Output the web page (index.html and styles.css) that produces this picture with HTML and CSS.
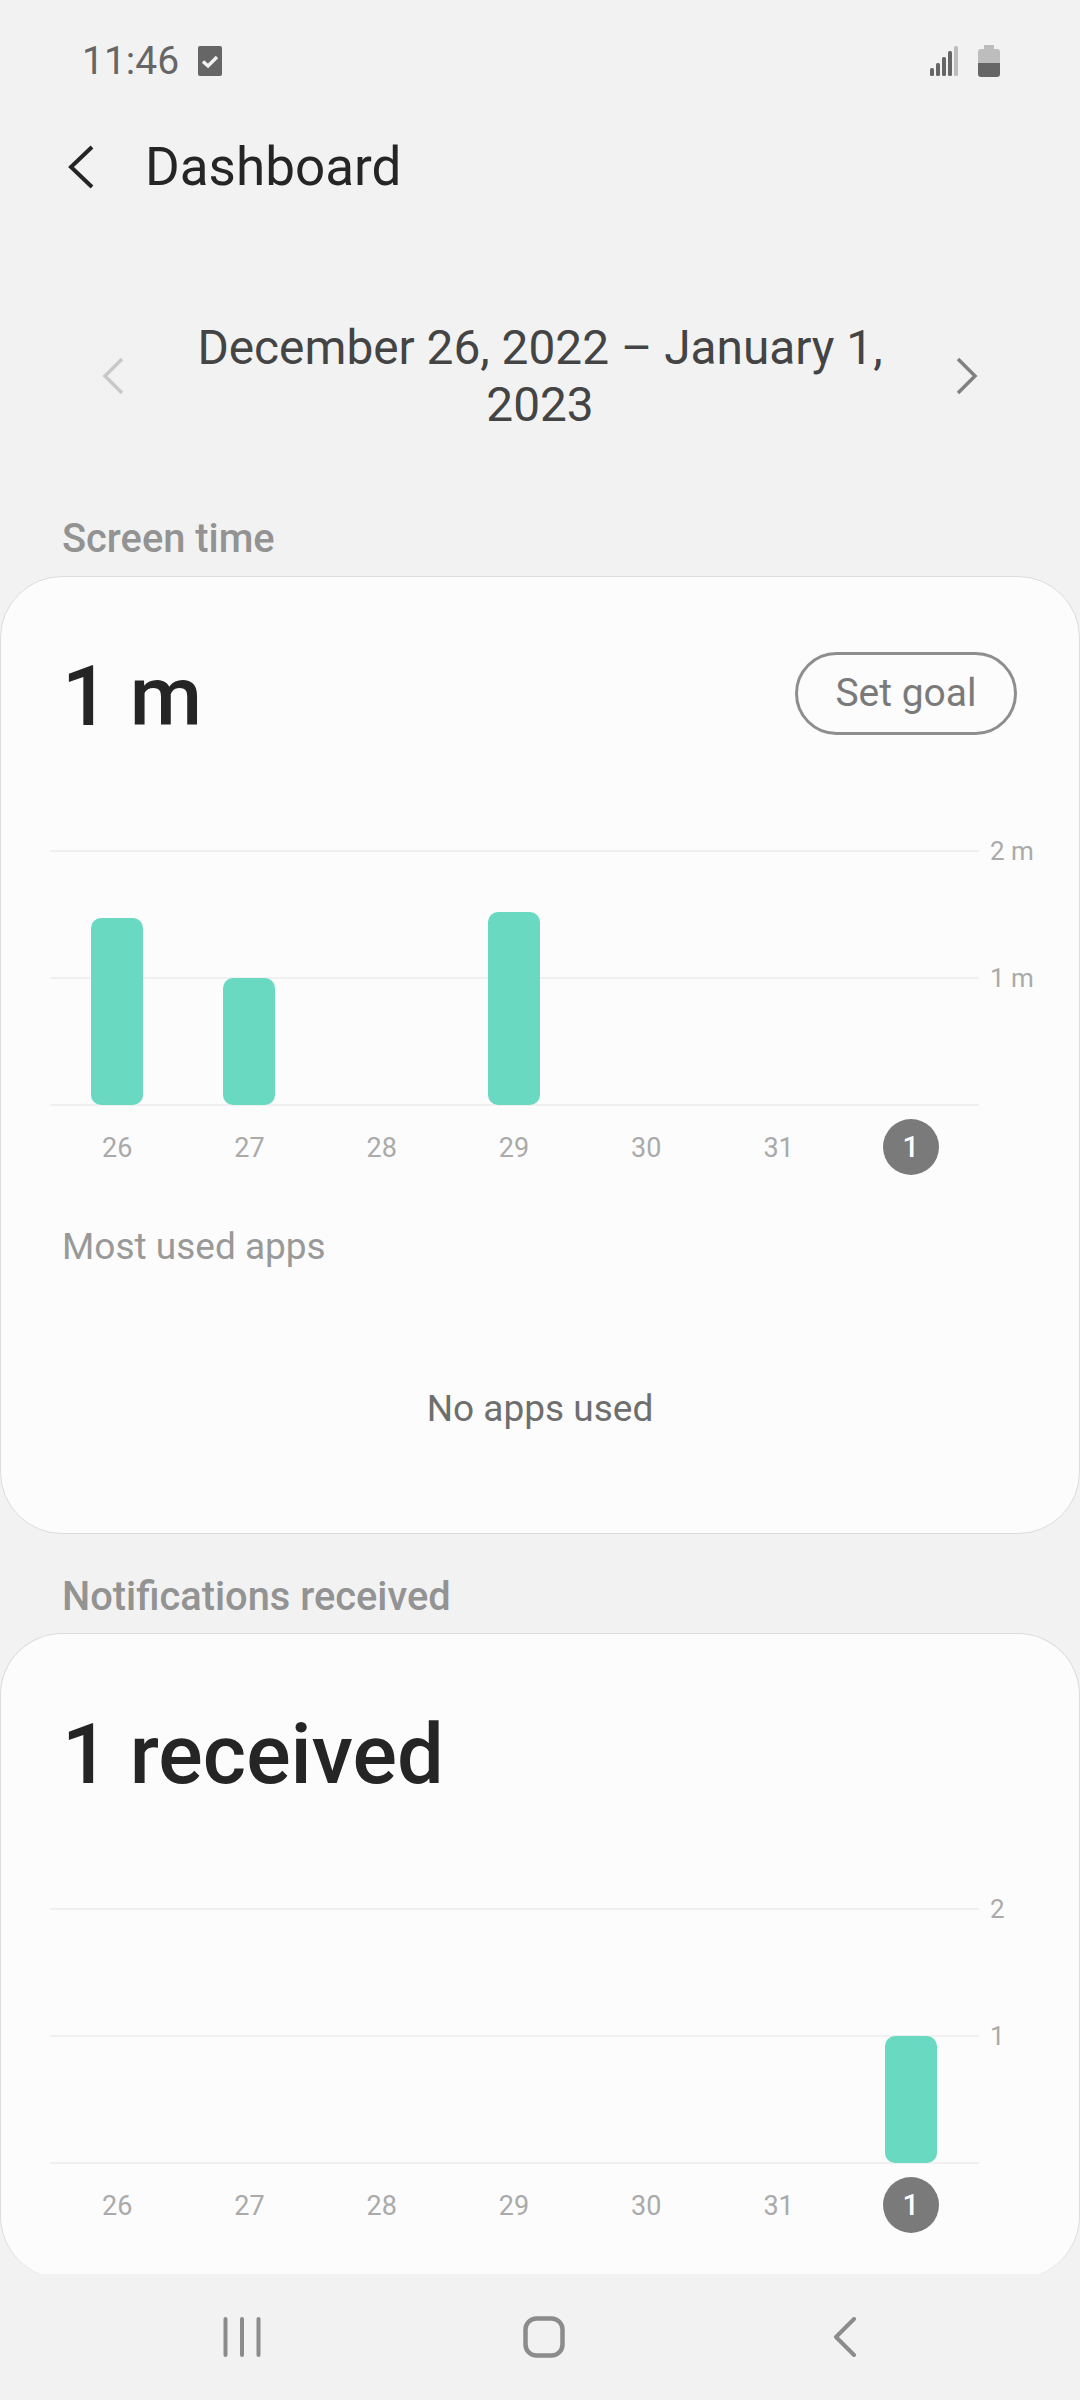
FILE: index.html
```html
<!DOCTYPE html>
<html lang="en">
<head>
    <meta charset="UTF-8">
    <meta name="viewport" content="width=device-width, initial-scale=1.0">
    <title>Dashboard</title>
    <link rel="stylesheet" href="styles.css">
</head>
<body>

    <div class="status-bar">
        <div class="status-left">
            <span class="clock">11:46</span>
            <svg width="24" height="30" viewBox="0 0 24 30"><rect width="24" height="30" rx="2" fill="#666"/><path d="M5 15.5l5 4.5 9-9" fill="none" stroke="#f2f2f2" stroke-width="3.4"/></svg>
        </div>
        <div class="status-right">
            <svg width="28" height="30" viewBox="0 0 28 30">
                <rect x="0" y="22" width="4" height="8" rx="1.5" fill="#666"/>
                <rect x="6" y="17" width="4" height="13" rx="1.5" fill="#666"/>
                <rect x="12" y="11" width="4" height="19" rx="1.5" fill="#666"/>
                <rect x="18" y="5" width="4" height="25" rx="1.5" fill="#666"/>
                <rect x="24" y="0" width="4" height="30" rx="1.5" fill="#bdbdbd"/>
            </svg>
            <svg width="22" height="32" viewBox="0 0 22 32">
                <path d="M6 0h10v4h3a3 3 0 0 1 3 3v11H0V7a3 3 0 0 1 3-3h3z" fill="#bdbdbd"/>
                <path d="M0 18h22v11a3 3 0 0 1-3 3H3a3 3 0 0 1-3-3z" fill="#666"/>
            </svg>
        </div>
    </div>

    <div class="toolbar">
        <svg width="26" height="44" viewBox="0 0 26 44"><path d="M24 2L3 22l21 20" fill="none" stroke="#252525" stroke-width="4"/></svg>
        <h1>Dashboard</h1>
    </div>

    <div class="date-nav">
        <svg width="22" height="38" viewBox="0 0 22 38"><path d="M20 2L3 19l17 17" fill="none" stroke="#c8c8c8" stroke-width="3.5"/></svg>
        <div class="date-range">December 26, 2022 – January 1, 2023</div>
        <svg width="22" height="38" viewBox="0 0 22 38"><path d="M2 2l17 17L2 36" fill="none" stroke="#808080" stroke-width="3.5"/></svg>
    </div>

    <h2 class="section-title">Screen time</h2>
    <section class="card">
        <div class="card-head">
            <div class="big-value">1 m</div>
            <button class="goal-btn">Set goal</button>
        </div>
        <div class="chart">
            <div class="grid-lines">
                <div class="grid-row"><i></i><span>2 m</span></div>
                <div class="grid-row"><i></i><span>1 m</span></div>
                <div class="grid-row"><i></i></div>
            </div>
            <div class="bars">
                <div class="bar-col"><div class="bar" style="height: 187px"></div></div>
                <div class="bar-col"><div class="bar" style="height: 127px"></div></div>
                <div class="bar-col"></div>
                <div class="bar-col"><div class="bar" style="height: 193px"></div></div>
                <div class="bar-col"></div>
                <div class="bar-col"></div>
                <div class="bar-col"></div>
            </div>
        </div>
        <div class="days">
            <span>26</span><span>27</span><span>28</span><span>29</span><span>30</span><span>31</span><span class="today">1</span>
        </div>
        <div class="apps-title">Most used apps</div>
        <div class="no-apps">No apps used</div>
    </section>

    <h2 class="section-title second">Notifications received</h2>
    <section class="card card-short">
        <div class="card-head">
            <div class="big-value">1 received</div>
        </div>
        <div class="chart">
            <div class="grid-lines">
                <div class="grid-row"><i></i><span>2</span></div>
                <div class="grid-row"><i></i><span>1</span></div>
                <div class="grid-row"><i></i></div>
            </div>
            <div class="bars">
                <div class="bar-col"></div>
                <div class="bar-col"></div>
                <div class="bar-col"></div>
                <div class="bar-col"></div>
                <div class="bar-col"></div>
                <div class="bar-col"></div>
                <div class="bar-col"><div class="bar" style="height: 127px"></div></div>
            </div>
        </div>
        <div class="days">
            <span>26</span><span>27</span><span>28</span><span>29</span><span>30</span><span>31</span><span class="today">1</span>
        </div>
    </section>

    <nav class="nav-bar">
        <svg width="38" height="40" viewBox="0 0 38 40"><path d="M2.5 2v36M19 2v36M35.500 2v36" fill="none" stroke="#8c8c8c" stroke-width="4" stroke-linecap="round"/></svg>
        <svg class="nav-home" width="42" height="42" viewBox="0 0 42 42"><rect x="2.500" y="2.500" width="37" height="37" rx="11" fill="none" stroke="#8c8c8c" stroke-width="4.500"/></svg>
        <svg width="24" height="40" viewBox="0 0 24 40"><path d="M21 2L3 20l18 18" fill="none" stroke="#8c8c8c" stroke-width="4" stroke-linecap="round" stroke-linejoin="round"/></svg>
    </nav>

</body>
</html>
```

FILE: styles.css
```css
* {
    margin: 0;
    padding: 0;
    box-sizing: border-box;
}
html, body {
    width: 1080px;
    height: 2400px;
    overflow: hidden;
    background-color: #f2f2f2;
    font-family: Roboto, sans-serif;
}
.status-bar {
    height: 122px;
    padding: 0 80px 0 82px;
    display: flex;
    justify-content: space-between;
    align-items: center;
}
.status-left {
    display: flex;
    align-items: center;
    gap: 19px;
}
.clock {
    font-size: 39px;
    color: #666;
}
.status-right {
    display: flex;
    align-items: center;
    gap: 20px;
}
.toolbar {
    height: 90px;
    padding-left: 68px;
    display: flex;
    align-items: center;
    gap: 51px;
}
h1 {
    font-size: 53px;
    font-weight: 400;
    color: #252525;
}
.date-nav {
    margin-top: 105px;
    padding: 0 102px;
    display: flex;
    justify-content: space-between;
    align-items: center;
}
.date-range {
    width: 720px;
    padding-top: 3px;
    text-align: center;
    font-size: 47.8px;
    line-height: 57px;
    color: #444;
}
.section-title {
    margin-top: 83px;
    padding-left: 62px;
    font-size: 39.8px;
    line-height: 44px;
    font-weight: 500;
    color: #939393;
}
.section-title.second {
    margin-top: 41px;
}
.card {
    margin-top: 15px;
    height: 958px;
    padding: 74px 0 0 50px;
    background-color: #fcfcfc;
    border: 1.5px solid #dcdcdc;
    border-radius: 62px;
}
.section-title.second + .card {
    margin-top: 14px;
}
.card-short {
    height: 645px;
    padding-top: 75px;
    border-bottom: none;
}
.card-head {
    height: 84px;
    padding: 0 62px 0 11px;
    display: flex;
    justify-content: space-between;
    align-items: center;
}
.big-value {
    padding-top: 6px;
    font-size: 83px;
    font-weight: 500;
    color: #252525;
}
.goal-btn {
    width: 222px;
    height: 83px;
    background: transparent;
    border: 3px solid #8e8e8e;
    border-radius: 42px;
    font-family: Roboto, sans-serif;
    font-size: 39px;
    color: #7a7a7a;
}
.chart {
    position: relative;
    margin-top: 115px;
    height: 255px;
}
.grid-lines {
    height: 100%;
    display: flex;
    flex-direction: column;
    justify-content: space-between;
}
.grid-row {
    height: 1px;
    display: flex;
    align-items: center;
}
.grid-row i {
    width: 929px;
    height: 2px;
    margin-left: -1px;
    background-color: #f0f0f0;
}
.grid-row span {
    margin-left: 11px;
    font-size: 26px;
    color: #aaa;
}
/* bars sit on top of the grid lines */
.bars {
    position: absolute;
    left: 0;
    bottom: 0;
    width: 926px;
    height: 100%;
    display: grid;
    grid-template-columns: repeat(7, 1fr);
}
.bar-col {
    display: flex;
    justify-content: center;
    align-items: flex-end;
}
.bar {
    width: 52px;
    background-color: #69d9c1;
    border-radius: 10px;
}
.days {
    width: 926px;
    height: 58px;
    margin-top: 13px;
    display: grid;
    grid-template-columns: repeat(7, 1fr);
    justify-items: center;
    align-items: center;
    font-size: 27px;
    color: #aaa;
}
.days span {
    padding-top: 2px;
}
.days .today {
    width: 56px;
    height: 56px;
    padding-top: 0;
    display: flex;
    justify-content: center;
    align-items: center;
    border-radius: 50%;
    background-color: #7a7a7a;
    color: #fff;
    font-size: 29px;
    font-weight: 500;
}
.apps-title {
    margin-top: 49px;
    padding-left: 11px;
    font-size: 37px;
    line-height: 44px;
    color: #999;
}
.no-apps {
    margin: 118px 0 0 -50px;
    font-size: 37px;
    line-height: 44px;
    text-align: center;
    color: #6e6e6e;
}
.nav-bar {
    position: absolute;
    left: 0;
    bottom: 0;
    width: 100%;
    height: 126px;
    padding: 0 223px;
    display: flex;
    justify-content: space-between;
    align-items: center;
    background-color: #f2f2f2;
}
.nav-home {
    margin-right: 7px;
}
```
